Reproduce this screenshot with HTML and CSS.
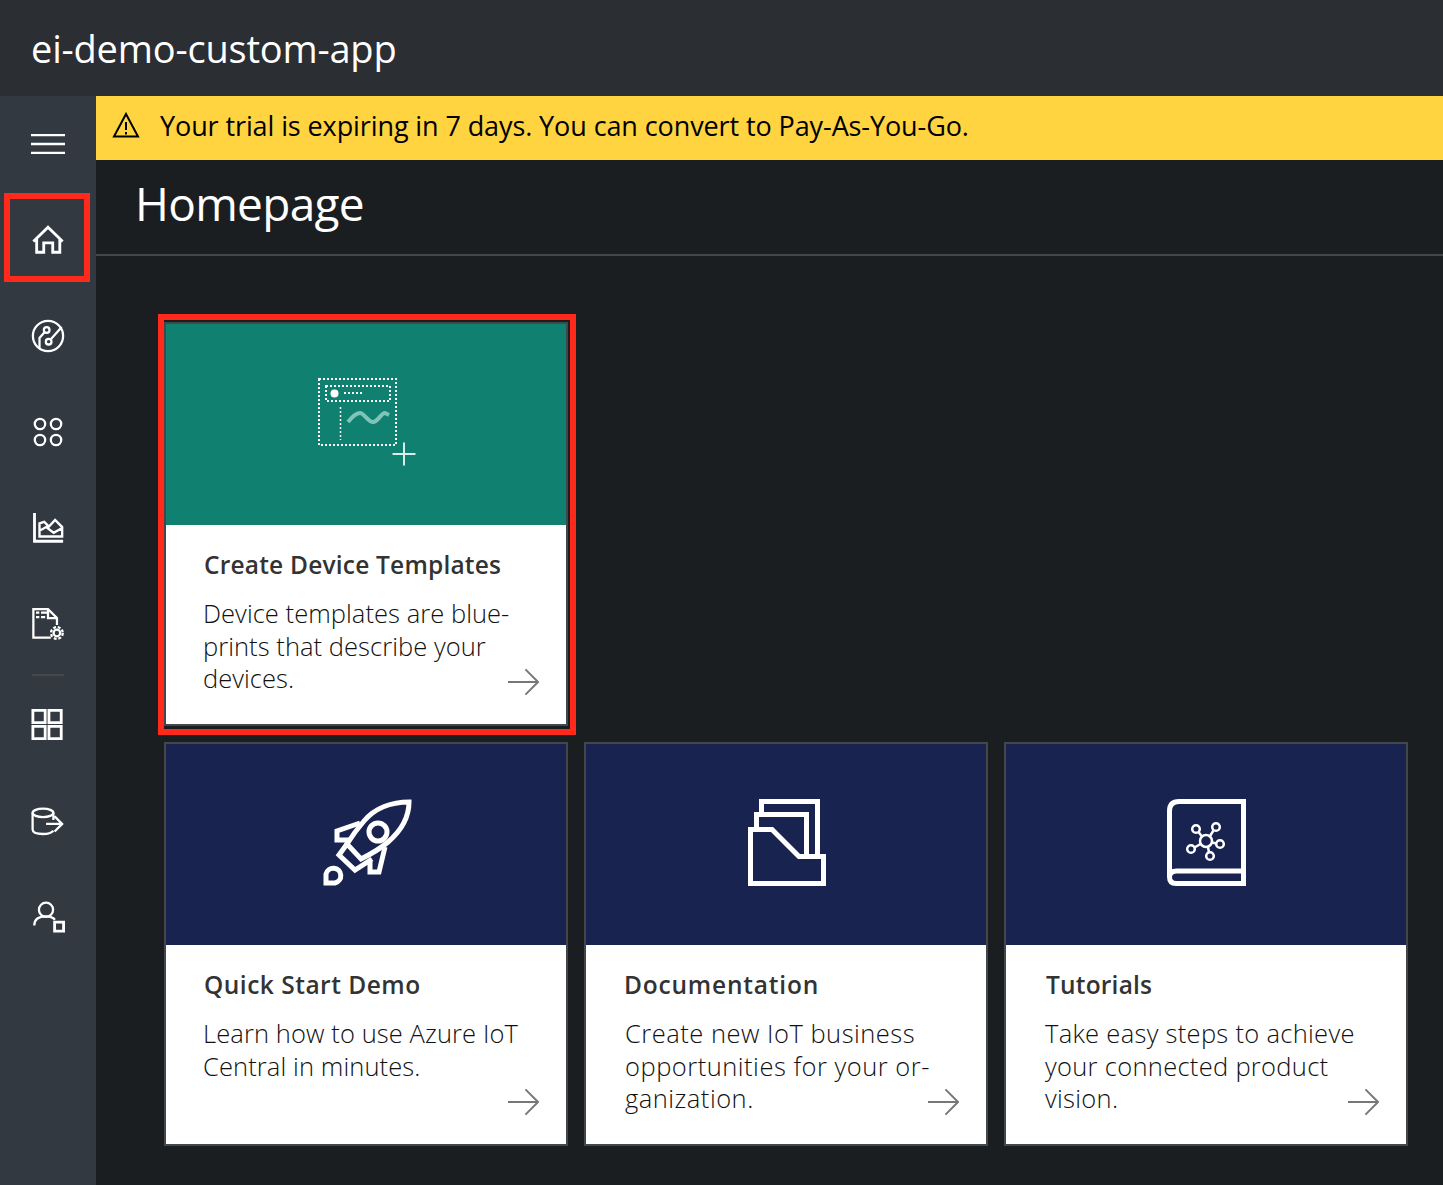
FILE: index.html
```html
<!DOCTYPE html>
<html lang="en">
<head>
  <meta charset="UTF-8">
  <meta name="viewport" content="width=device-width, initial-scale=1.0">
  <title>ei-demo-custom-app</title>
  <link rel="stylesheet" href="styles.css">
</head>
<body>

  <header class="app-bar">ei-demo-custom-app</header>

  <div class="layout">
    <nav class="sidebar">
      <a class="nav-item">
        <svg class="nav-icon" viewBox="0 0 36 36"><path d="M0 8.500h36M0 18h36M0 27.500h36"/></svg>
      </a>
      <a class="nav-item nav-item-marked">
        <svg class="nav-icon nav-icon-bold" viewBox="0 0 36 36"><path d="M2.500 19.500 18 4.500l15.500 15M6 16.500V31h7.500V21H23v10h7.500V16.500"/></svg>
      </a>
      <a class="nav-item">
        <svg class="nav-icon" viewBox="0 0 36 36"><circle cx="18" cy="18" r="16"/><circle cx="16.600" cy="11.700" r="3"/><circle cx="18.700" cy="24" r="3"/><path d="M21 21.500 32.500 8.500M14.300 14 9 20v11.500"/></svg>
      </a>
      <a class="nav-item">
        <svg class="nav-icon" viewBox="0 0 36 36"><circle cx="9.500" cy="9.500" r="5.500"/><circle cx="26.500" cy="9.500" r="5.500"/><circle cx="9.500" cy="26.500" r="5.500"/><circle cx="26.500" cy="26.500" r="5.500"/></svg>
      </a>
      <a class="nav-item">
        <svg class="nav-icon nav-icon-bold" viewBox="0 0 36 36"><path d="M3.700 2v30H34"/><path d="M9 27V13l5-1.500 5 5 6.500-7L33 17v10zM9 21l7-4 8 6 9-5" stroke-width="2.500"/></svg>
      </a>
      <a class="nav-item">
        <svg class="nav-icon" viewBox="0 0 36 36"><path d="M21 32.500H2.500V2.200H18l9.500 9.500V19M18 2.200v9.500h9.500M5.300 6h3.500M10.600 6H17M5.300 10.600h3.500M10.600 10.600H15"/><circle cx="27.400" cy="27.500" r="3.500" stroke-width="2.400"/><circle cx="27.400" cy="27.500" r="6.200" stroke-width="2.400" stroke-dasharray="3 1.900"/></svg>
      </a>
      <div class="nav-divider"></div>
      <a class="nav-item">
        <svg class="nav-icon nav-icon-bold" viewBox="0 0 36 36"><path d="M2 3.500h13v13H2zM19 3.500h13v13H19zM2 20.500h13v13H2zM19 20.500h13v13H19z"/></svg>
      </a>
      <a class="nav-item nav-item-gap">
        <svg class="nav-icon" viewBox="0 0 36 36"><ellipse cx="12.700" cy="8.300" rx="11" ry="4.500"/><path d="M1.700 8.300V26q0 4.700 11 4.700 8 0 11-3.500M23.700 8.300V16M16 20h17M25 12l8 8-8 8"/></svg>
      </a>
      <a class="nav-item nav-item-user">
        <svg class="nav-icon" viewBox="0 0 36 36"><circle cx="15.900" cy="11.400" r="7.500"/><path d="M3.500 28q0-9.500 12.400-9.500 6.500 0 9.500 3.500"/><path d="M25 24.500h9.500V34H25z" stroke-width="3"/></svg>
      </a>
    </nav>

    <main class="content">
      <div class="trial-banner">
        <svg class="trial-icon" viewBox="0 0 28 26"><path d="M14 2 2 24.500h24zM14 10v8M14 20v2.500"/></svg>
        <span>Your trial is expiring in 7 days. You can convert to Pay-As-You-Go.</span>
      </div>

      <div class="page-title"><h1>Homepage</h1></div>

      <div class="tiles">
        <div class="tile tile-marked">
          <div class="tile-art tile-art-green">
            <svg class="art-small" viewBox="0 0 100 90">
              <path class="dots" d="M1 1h77v66H1z"/>
              <path class="dots" d="M8 8h64v15H8z"/>
              <circle class="dot-fill" cx="16.500" cy="15.500" r="4"/>
              <path class="dots" d="M26 15h18"/>
              <path class="dots dots-thin" d="M22.500 29v33"/>
              <path class="wave" d="M30 44c5-6 8-9 12-9s8 9 13 9 8-9 12-9l4 2"/>
              <path class="plus" d="M86 64.500v23M74.500 76h23"/>
            </svg>
          </div>
          <div class="tile-body">
            <h2>Create Device Templates</h2>
            <p>Device templates are blue-<br>prints that describe your<br>devices.</p>
            <svg class="tile-arrow" viewBox="0 0 32 28"><path d="M0 14h30M18 1l13 13-13 13"/></svg>
          </div>
        </div>

        <div class="tile tile-first">
          <div class="tile-art">
            <svg class="art-big art-rocket" viewBox="0 0 90 90">
              <path d="M87 3C70 3 53 9 42 22 35 30 30 37 25 45L39 60C47 56 58 50 66 43 80 31 87 19 87 3Z"/>
              <circle cx="56" cy="33" r="9"/>
              <path d="M38 24 15 32v9h12M63 48 57 73H48V62M25 45 17 56 33 71 50 60"/>
              <path d="M4 84V75A7.500 7.500 0 1 1 13 84Z"/>
            </svg>
          </div>
          <div class="tile-body">
            <h2>Quick Start Demo</h2>
            <p>Learn how to use Azure IoT<br>Central in minutes.</p>
            <svg class="tile-arrow" viewBox="0 0 32 28"><path d="M0 14h30M18 1l13 13-13 13"/></svg>
          </div>
        </div>

        <div class="tile tile-second">
          <div class="tile-art">
            <svg class="art-big" viewBox="0 0 90 90">
              <path d="M20.500 15V2.500h56V57"/>
              <path d="M15.500 30V15.500h50V57"/>
              <path d="M9.500 84.500v-54H31L58 57.500h24.500v27z"/>
            </svg>
          </div>
          <div class="tile-body">
            <h2>Documentation</h2>
            <p>Create new IoT business<br>opportunities for your or-<br>ganization.</p>
            <svg class="tile-arrow" viewBox="0 0 32 28"><path d="M0 14h30M18 1l13 13-13 13"/></svg>
          </div>
        </div>

        <div class="tile tile-third">
          <div class="tile-art">
            <svg class="art-big" viewBox="0 0 90 90">
              <path d="M82.500 72V2.500H18Q8.500 2.500 8.500 12v66q0 6.500 6.500 6.500h67.500V72H16q-7.500 0-7.500 6"/>
              <g class="thin">
                <circle cx="45" cy="42" r="6"/>
                <circle cx="35" cy="30" r="3.800"/>
                <circle cx="55" cy="28" r="3.800"/>
                <circle cx="59" cy="45" r="3.800"/>
                <circle cx="49" cy="57" r="3.800"/>
                <circle cx="30" cy="50" r="3.800"/>
                <path d="M37.500 33l3.500 4.500M52.500 31.500 49 37M55.500 44.500 51 43.500M48 53.500l-1-5.500M33.500 48.500 39.500 45"/>
              </g>
            </svg>
          </div>
          <div class="tile-body">
            <h2>Tutorials</h2>
            <p>Take easy steps to achieve<br>your connected product<br>vision.</p>
            <svg class="tile-arrow" viewBox="0 0 32 28"><path d="M0 14h30M18 1l13 13-13 13"/></svg>
          </div>
        </div>
      </div>
    </main>
  </div>

</body>
</html>
```

FILE: styles.css
```css
*, *::after { box-sizing: border-box; margin: 0; padding: 0; }
html, body { height: 100%; overflow: hidden; }
body { background: #1b1e20; color: white; font-family: 'Open Sans', 'Noto Sans', sans-serif; }

.app-bar { height: 96px; padding-left: 31px; background: #2b2e33; font-size: 38px; line-height: 96px; letter-spacing: -0.200px; }

.layout { display: flex; height: 1089px; }

.sidebar { width: 96px; flex-shrink: 0; background: #323941; }
.nav-item { position: relative; display: flex; justify-content: center; align-items: center; height: 96px; }
.nav-item-gap { margin-top: 2px; }
.nav-item-user { margin-top: -2px; }
.nav-item-marked::after { content: ''; position: absolute; top: 1px; left: 4px; width: 86px; height: 89px; border: 6px solid #ff2a1c; }
.nav-icon { width: 34px; height: 34px; fill: none; stroke: white; stroke-width: 2.400; }
.nav-icon-bold { stroke-width: 3; }
.nav-divider { width: 32px; height: 2px; margin: 2px auto 0; background: #44484c; }

.content { flex: 1; min-width: 0; }

.trial-banner { display: flex; align-items: center; height: 64px; padding: 0 0 6px 16px; gap: 20px; background: #ffd440; color: black; font-size: 27px; letter-spacing: -0.100px; }
.trial-icon { width: 28px; height: 26px; fill: none; stroke: black; stroke-width: 2; }

.page-title { height: 96px; padding: 12px 0 0 39px; border-bottom: 2px solid #444749; }
.page-title h1 { font-size: 46px; font-weight: 400; line-height: 62px; letter-spacing: -0.700px; }

.tiles { display: grid; grid-template-columns: repeat(3, 404px); gap: 16px; padding: 66px 0 0 68px; }

.tile { position: relative; display: flex; flex-direction: column; height: 404px; border: 2px solid #444749; background: white; }
.tile-marked { grid-column: 1 / 4; width: 404px; }
.tile-marked::after { content: ''; position: absolute; top: -10px; left: -8px; width: 418px; height: 421px; border: 6px solid #ff2a1c; }
.tile-first { grid-column: 1; }

.tile-art { display: flex; justify-content: center; align-items: center; height: 201px; flex-shrink: 0; background: #18244f; }
.tile-art-green { background: #108070; }

.art-small { width: 100px; height: 90px; margin: 0 0 3px 4px; fill: none; }
.dots { stroke: white; stroke-width: 2; stroke-dasharray: 2 2; fill: none; }
.dots-thin { stroke-width: 1.500; }
.dot-fill { fill: white; }
.wave { stroke: #7fc4b8; stroke-width: 4; fill: none; }
.plus { stroke: #d8eeea; stroke-width: 2; fill: none; }

.art-big { width: 90px; height: 90px; margin-bottom: 1px; fill: none; stroke: white; stroke-width: 5; }
.art-rocket { margin-left: 2px; }
.thin { stroke-width: 2.500; }

.tile-body { position: relative; flex: 1; padding: 22px 20px 0 37px; color: #111; }
.tile-body h2 { margin: 0 0 14px 1px; color: #333; font-size: 24.500px; font-weight: 600; line-height: 36px; letter-spacing: 0.200px; }
.tile-body p { font-size: 25.500px; font-weight: 300; line-height: 32.500px; letter-spacing: 0.050px; }
.tile-arrow { position: absolute; right: 27px; bottom: 28px; width: 31px; height: 28px; fill: none; stroke: #777; stroke-width: 2; }

.tile-first h2 { letter-spacing: 0.500px; }
.tile-first p { letter-spacing: 0.100px; }
.tile-second h2 { letter-spacing: 0.800px; }
.tile-second p { margin-left: 2px; letter-spacing: 0.500px; }
.tile-third .tile-body { padding-left: 39px; }
.tile-third p { letter-spacing: 0.300px; }
```
